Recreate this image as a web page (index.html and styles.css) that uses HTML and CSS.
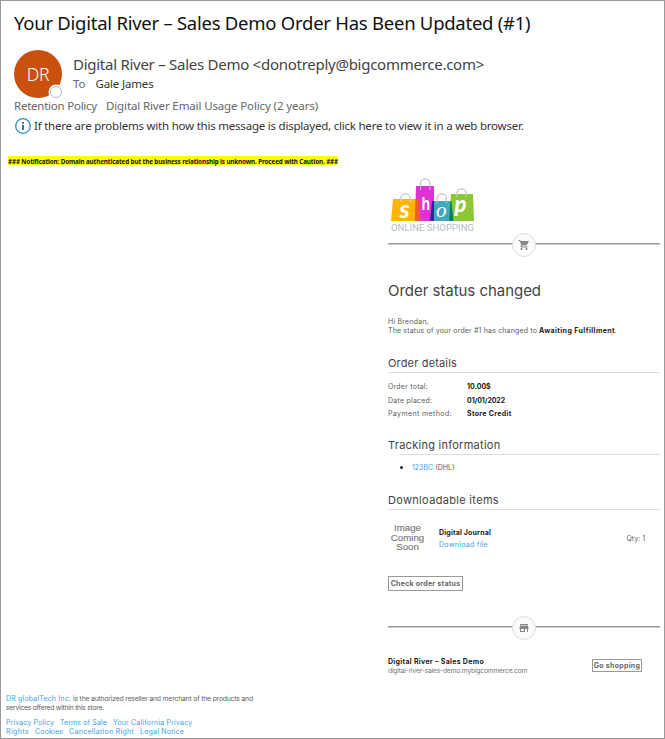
FILE: index.html
```html
<!DOCTYPE html>
<html lang="en">
<head>
<meta charset="utf-8">
<title>Order Updated</title>
<link rel="stylesheet" href="styles.css">
</head>
<body>
<div class="window">
  <header class="header">
    <div class="subject"><span class="t-subject">Your Digital River – Sales Demo Order Has Been Updated (#1)</span></div>
    <div class="sender">
      <div class="avatar"><span class="initials">DR</span><span class="presence"></span></div>
      <div class="people">
        <div class="from"><span class="t-from">Digital River – Sales Demo &lt;donotreply@bigcommerce.com&gt;</span></div>
        <div class="to"><span class="t-to">To</span><span class="t-name">Gale James</span></div>
      </div>
    </div>
    <div class="policy"><span class="t-ret">Retention Policy</span><span class="t-pol">Digital River Email Usage Policy (2 years)</span></div>
    <div class="info">
      <svg class="info-icon" viewBox="0 0 16 16"><circle cx="8" cy="8" r="7.3" fill="none" stroke="#2b88c8" stroke-width="1.3"/><path d="M7 3.900h2v1.800H7zM7 7h2v5H7z" fill="#1a7bc0"/></svg>
      <span class="t-info">If there are problems with how this message is displayed, click here to view it in a web browser.</span>
    </div>
  </header>
  <div class="notice"><span class="t-notice">### Notification: Domain authenticated but the business relationship is unknown. Proceed with Caution. ###</span></div>

  <main class="email">
    <svg class="logo" viewBox="0 0 90 62">
      <g fill="none" stroke="#b9c3ca" stroke-width="1.2">
        <path d="M12.800 30v-3.500a4.700 4.700 0 0 1 9.400 0V30M32.500 18v-6.500a4.700 4.700 0 0 1 9.400 0v6.500M49 31v-4.500a4.700 4.700 0 0 1 9.400 0V31M68.800 25v-3.500a4.700 4.700 0 0 1 9.400 0v3.500"/>
      </g>
      <path d="M5 27h26l1 22H3z" fill="#ffb400"/>
      <path d="M28 14h18v35H27z" fill="#df32d4"/>
      <path d="M28 27h3.500l1 22H27z" fill="#ef5b26"/>
      <path d="M44 29h19l2 20H42z" fill="#40a9bd"/>
      <path d="M44 29h2v20h-4z" fill="#37209b"/>
      <path d="M63 22h22l1 27H61z" fill="#8cc63b"/>
      <path d="M62.500 29h1l2 20H61z" fill="#008060"/>
      <g fill="none" stroke="#fff" stroke-opacity=".55" stroke-width="1">
        <path d="M12.800 27v3M22.200 27v3M32.500 14v4M41.900 14v4M49 29v2.500M58.400 29v2.500M68.800 22v3M78.200 22v3"/>
      </g>
      <text class="bag bag-s" x="11.500" y="46">s</text>
      <text class="bag bag-h" x="33.500" y="38" textLength="8.500" lengthAdjust="spacingAndGlyphs">h</text>
      <text class="bag bag-o" x="48" y="45">o</text>
      <text class="bag bag-p" x="66.500" y="39.500">p</text>
      <text class="tagline" x="3" y="58.500" textLength="83" lengthAdjust="spacingAndGlyphs">ONLINE SHOPPING</text>
    </svg>
    <div class="divider"><span class="badge"><svg viewBox="0 0 24 24"><path d="M7 18c-1.100 0-2 .9-2 2s.9 2 2 2 2-.9 2-2-.9-2-2-2zM1 2v2h2l3.600 7.600-1.400 2.400c-.7 1.300.3 3 1.800 3h12v-2H7.400l1.100-2h7.500c.7 0 1.400-.4 1.700-1l3.600-6.500C21.700 4.800 21.200 4 20.400 4H5.200l-.9-2H1zm16 16c-1.100 0-2 .9-2 2s.9 2 2 2 2-.9 2-2-.9-2-2-2z"/></svg></span></div>
    <h1><span class="t-h1">Order status changed</span></h1>
    <div class="greeting">
      <p><span class="t-hi">Hi Brendan,</span></p>
      <p><span class="t-status">The status of your order #1 has changed to</span><b class="t-await">Awaiting Fulfillment</b><span class="stop">.</span></p>
    </div>
    <h2><span class="t-h2a">Order details</span></h2>
    <dl class="details">
      <dt><span class="t-d1">Order total:</span></dt><dd><span class="t-v1">10.00$</span></dd>
      <dt><span class="t-d2">Date placed:</span></dt><dd><span class="t-v2">01/01/2022</span></dd>
      <dt><span class="t-d3">Payment method:</span></dt><dd><span class="t-v3">Store Credit</span></dd>
    </dl>
    <h2 class="tracking"><span class="t-h2b">Tracking information</span></h2>
    <ul class="shipments"><li><a class="t-track">123BC</a><span class="t-dhl">(DHL)</span></li></ul>
    <h2 class="downloads"><span class="t-h2c">Downloadable items</span></h2>
    <div class="item">
      <div class="thumb"><span>Image</span><span>Coming</span><span>Soon</span></div>
      <div class="item-text"><b class="t-dj">Digital Journal</b><a class="t-dl">Download file</a></div>
      <div class="qty"><span class="t-qty">Qty: 1</span></div>
    </div>
    <div class="button check"><span class="t-check">Check order status</span></div>
    <div class="divider lower"><span class="badge"><svg viewBox="0 0 24 24"><path d="M20 4H4v2h16V4zm1 10v-2l-1-5H4l-1 5v2h1v6h10v-6h4v6h2v-6h1zm-9 4H6v-4h6v4z"/></svg></span></div>
    <div class="store">
      <div><p><b class="t-store">Digital River – Sales Demo</b></p><p class="url"><span class="t-url">digital-river-sales-demo.mybigcommerce.com</span></p></div>
      <div class="button shop"><span class="t-go">Go shopping</span></div>
    </div>
  </main>

  <footer class="legal">
    <p><a class="t-inc">DR globalTech Inc.</a><span class="t-l1">is the authorized reseller and merchant of the products and</span></p>
    <p><span class="t-l2">services offered within this store.</span></p>
    <nav><a class="t-n1">Privacy Policy</a><a class="t-n1">Terms of Sale</a><a class="t-n3">Your California Privacy</a></nav>
    <nav><a class="t-n4">Rights</a><a class="t-n3">Cookies</a><a class="t-n6">Cancellation Right</a><a class="t-n7">Legal Notice</a></nav>
  </footer>
</div>
</body>
</html>
```
FILE: styles.css
```css
* { box-sizing: border-box; }
body { margin: 0; background: #fff; }
p, h1, h2, dl, dd, ul { margin: 0; padding: 0; }
span, a, b { white-space: nowrap; }
.window { width: 665px; height: 739px; border: 1px solid #999; overflow: hidden; font-family: Inter, sans-serif; color: #5c5c5c; }
.header { padding: 10px 0 0 13px; font-family: "Noto Sans", sans-serif; }
.subject { height: 24px; font-size: 18.5px; line-height: 24px; color: #111; }
.sender { display: flex; gap: 11px; height: 48px; margin-top: 15px; }
.avatar { position: relative; width: 48px; height: 48px; border-radius: 50%; background: #ca5010; color: #fff; text-align: center; font-size: 17.5px; font-weight: 300; line-height: 48px; }
.presence { position: absolute; left: 36px; top: 36px; width: 12px; height: 12px; border: 1.5px solid #a9bdc9; border-radius: 50%; background: #fff; box-shadow: 0 0 0 1.5px #fff; }
.people { padding-top: 4px; }
.from { height: 20px; font-size: 15px; line-height: 20px; color: #444; }
.to { display: flex; gap: 10px; margin-top: 2px; font-size: 11.5px; line-height: 16px; color: #666; }
.t-name { color: #333; }
.policy { display: flex; gap: 9px; height: 16px; font-size: 11.5px; line-height: 16px; color: #666; }
.info { display: flex; gap: 3px; margin: 4px 0 0 1px; height: 16px; font-size: 11.5px; line-height: 16px; color: #333; }
.info-icon { width: 16px; height: 16px; }
.notice { width: 330px; height: 9px; margin: 22px 0 0 7px; background: #ff0; color: #111; font: bold 6.3px/11px "Noto Sans", sans-serif; }
.email { width: 272px; margin: 7px 0 0 387px; font-size: 7px; line-height: 9px; }
.logo { display: block; width: 90px; height: 62px; }
.bag { fill: #fff; }
.bag-s { font: italic 900 25px Lato, sans-serif; }
.bag-h { font: bold 18px "Liberation Sans", sans-serif; }
.bag-o { font: italic 21px "Liberation Serif", serif; }
.bag-p { font: italic 900 22px Lato, sans-serif; }
.tagline { font: 8.5px Roboto, sans-serif; fill: #b7bec6; }
.divider { display: flex; justify-content: center; height: 24px; margin-top: -1px; background: linear-gradient(#999, #999) 0 10px / 100% 1px no-repeat, linear-gradient(#ccc, #ccc) 0 11px / 100% 1px no-repeat; }
.badge { display: flex; align-items: center; justify-content: center; width: 24px; height: 24px; border: 1px solid #ddd; border-radius: 50%; background: #fbfbfb; }
.badge svg { width: 12px; height: 12px; fill: #888; }
h1 { margin-top: 24px; font-size: 15px; font-weight: 400; line-height: 20px; color: #444; }
.greeting { margin-top: 16px; }
.greeting b, dd, .item b, .store b { font-weight: 700; color: #222; }
.t-await { margin-left: 2px; }
.stop { margin-left: -1px; }
h2 { height: 18px; margin-top: 20px; border-bottom: 1px solid #ddd; font-size: 11px; font-weight: 400; line-height: 16px; color: #444; }
.details { display: grid; grid-template-columns: 79px 1fr; grid-template-rows: 14px 13px 13px; margin-top: 7px; line-height: 13px; }
.tracking { margin-top: 17px; border-bottom-color: transparent; background: linear-gradient(#ddd, #ddd) 12px 17px / 260px 1px no-repeat border-box; }
.shipments { margin-top: 8px; padding-left: 24px; list-style: none; }
.shipments li { display: flex; gap: 2px; }
.shipments li::before { content: ""; width: 3px; height: 3px; margin: 3px 7px 0 -12px; border-radius: 50%; background: #222; }
a { color: #3ea1e8; }
.item { display: flex; height: 29px; margin-top: 13px; }
.thumb { display: flex; flex-direction: column; align-items: center; width: 39px; font: 9.7px/9.7px "Liberation Sans", sans-serif; color: #808080; -webkit-text-stroke: 0.2px #808080; }
.item-text { display: flex; flex-direction: column; align-items: flex-start; gap: 3px; margin: 5px 0 0 12px; }
.qty { margin: 11px 15px 0 auto; }
.button { display: flex; align-items: center; justify-content: center; border: 1px solid #999; font-weight: 700; color: #666; }
.check { width: 75px; height: 15px; margin-top: 24px; }
.lower { margin-top: 25px; }
.store { display: flex; justify-content: space-between; margin-top: 17px; }
.shop { width: 50px; height: 13px; margin: 2px 18px 0 0; }
.url { color: #777; }
.legal { margin: 19px 0 0 5px; font-size: 7px; line-height: 8.5px; }
.legal p { display: flex; gap: 2px; }
.legal nav { display: flex; gap: 6px; line-height: 9px; }
.legal p + nav { margin-top: 6px; }

/* Tracking per text run */
.t-subject { letter-spacing: -0.255px; }
.initials { letter-spacing: -0.2px; }
.t-from { letter-spacing: -0.265px; }
.t-name { letter-spacing: -0.161px; }
.t-ret { letter-spacing: -0.237px; }
.t-pol { letter-spacing: -0.127px; }
.t-info { letter-spacing: -0.22px; }
.t-notice { letter-spacing: -0.12px; }
.t-h1 { letter-spacing: -0.037px; }
.t-hi { letter-spacing: 0.222px; }
.t-status { letter-spacing: 0.163px; }
.t-await { letter-spacing: 0.416px; }
.t-h2a { letter-spacing: 0.163px; }
.t-h2b { letter-spacing: 0.269px; }
.t-h2c { letter-spacing: 0.321px; }
.t-d1, .t-d2 { letter-spacing: 0.235px; }
.t-d3 { letter-spacing: 0.401px; }
.t-v2 { letter-spacing: -0.086px; }
.t-v3 { letter-spacing: 0.31px; }
.t-dj { letter-spacing: 0.17px; }
.t-dl { letter-spacing: 0.292px; }
.t-check { letter-spacing: 0.26px; }
.t-go { letter-spacing: 0.29px; }
.t-store { letter-spacing: 0.304px; }
.t-url { font-size: 6.7px; letter-spacing: -0.184px; }
.t-inc { letter-spacing: 0.173px; }
.t-l1 { font-size: 6.8px; letter-spacing: -0.175px; }
.t-l2 { font-size: 6.8px; letter-spacing: -0.25px; }
.t-n1 { letter-spacing: 0.115px; }
.t-n3 { letter-spacing: 0.18px; }
.t-n4 { letter-spacing: 0.406px; }
.t-n6 { letter-spacing: 0.289px; }
.t-n7 { letter-spacing: 0.211px; }
```
